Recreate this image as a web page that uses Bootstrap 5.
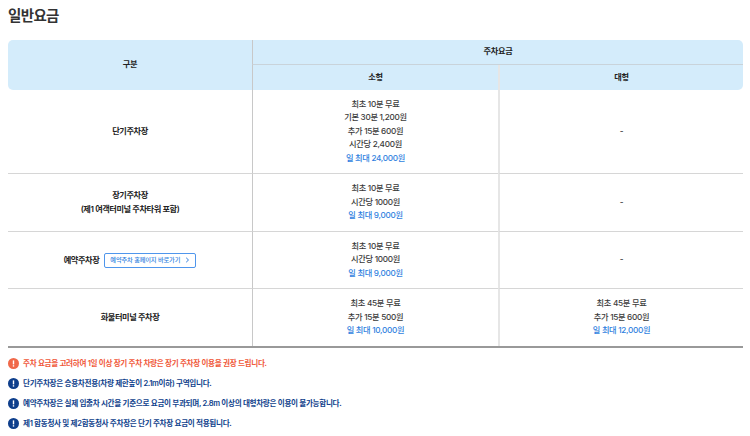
<!DOCTYPE html>
<html lang="ko">
<head>
<meta charset="utf-8">
<title>일반요금</title>
<link href="https://cdn.jsdelivr.net/npm/bootstrap@5.3.0/dist/css/bootstrap.min.css" rel="stylesheet">
<style>
html,body{height:100%;overflow:hidden}
body{font-family:Inter,"Noto Sans CJK KR","Noto Sans",sans-serif;background:#fff;color:#333;padding:0 7px 0 8px;font-size:8.2px}
.fee-title{font-size:14.5px;font-weight:600;line-height:22px;margin:5px 0 13px;color:#333;letter-spacing:-.65px}
.fee-table{table-layout:fixed;width:735px;margin:0;border-collapse:separate;border-spacing:0;border-bottom:2px solid #999}
.fee-table th,.fee-table td{padding:1px 0 0;text-align:center;vertical-align:middle;font-size:8.2px;line-height:13.6px;border:0;color:#3a3a3a;font-weight:500;letter-spacing:-.3px;box-shadow:none;background:transparent}
.fee-table thead th{background:#d4ecfb;font-weight:700;color:#222}
.fee-table .r1{height:24.5px;border-bottom:1px solid #c9d3da}
.fee-table .r2{height:25px}
.fee-table .sep{border-left:1px solid #c8c8c8}
.fee-table .sep2{border-left:2px solid #e6e6e6}
.fee-table .corner-l{border-radius:5px 0 0 5px}
.fee-table .corner-tr{border-top-right-radius:5px}
.fee-table .corner-br{border-bottom-right-radius:5px}
.fee-table tbody tr>*{border-bottom:1px solid #d6d6d6}
.fee-table tbody tr:last-child>*{border-bottom:0}
.fee-table tbody th{font-weight:600;color:#222;letter-spacing:-.42px}
.h-a{height:84px}.h-b{height:58px}.h-c{height:57px}.h-d{height:57px}
.max-fee{color:#2f7fe0}
.book-btn{display:inline-flex;align-items:center;gap:5px;height:15px;padding:0 5px;margin-left:5px;border:1px solid #4f96ec;border-radius:2px;color:#2f7fe0;font-size:6.2px;font-weight:500;letter-spacing:-.12px;text-decoration:none;vertical-align:middle;line-height:1}
.note-list{list-style:none;padding:0;margin:6px 0 0}
.note-item{display:flex;align-items:center;gap:4px;height:20px;font-size:7.6px;font-weight:600;color:#0f3f8c;letter-spacing:-.33px}
.note-item.warn{color:#f0583a}
.note-ico{width:11px;height:11px;flex:none}
</style>
</head>
<body>
<h2 class="fee-title">일반요금</h2>
<table class="table fee-table">
<colgroup><col style="width:244px"><col style="width:246px"><col style="width:245px"></colgroup>
<thead>
<tr><th rowspan="2" class="corner-l">구분</th><th colspan="2" class="r1 sep corner-tr">주차요금</th></tr>
<tr><th class="r2 sep">소형</th><th class="r2 sep2 corner-br">대형</th></tr>
</thead>
<tbody>
<tr class="h-a"><th>단기주차장</th><td class="sep">최초 10분 무료<br>기본 30분 1,200원<br>추가 15분 600원<br>시간당 2,400원<br><span class="max-fee">일 최대 24,000원</span></td><td class="sep2">-</td></tr>
<tr class="h-b"><th>장기주차장<br>(제1 여객터미널 주차타워 포함)</th><td class="sep">최초 10분 무료<br>시간당 1000원<br><span class="max-fee">일 최대 9,000원</span></td><td class="sep2">-</td></tr>
<tr class="h-c"><th>예약주차장<a href="#" class="book-btn">예약주차 홈페이지 바로가기 <svg width="5" height="6" viewBox="0 0 5 6"><path d="M1.2.8 3.5 3 1.2 5.2" fill="none" stroke="#2f7fe0" stroke-width="1"/></svg></a></th><td class="sep">최초 10분 무료<br>시간당 1000원<br><span class="max-fee">일 최대 9,000원</span></td><td class="sep2">-</td></tr>
<tr class="h-d"><th>화물터미널 주차장</th><td class="sep">최초 45분 무료<br>추가 15분 500원<br><span class="max-fee">일 최대 10,000원</span></td><td class="sep2">최초 45분 무료<br>추가 15분 600원<br><span class="max-fee">일 최대 12,000원</span></td></tr>
</tbody>
</table>
<ul class="note-list">
<li class="note-item warn"><svg class="note-ico" viewBox="0 0 11 11"><circle cx="5.5" cy="5.5" r="5.5" fill="#f0694a"/><rect x="4.8" y="2.4" width="1.4" height="4" fill="#fff"/><rect x="4.8" y="7.2" width="1.4" height="1.4" fill="#fff"/></svg>주차 요금을 고려하여 1일 이상 장기 주차 차량은 장기 주차장 이용을 권장 드립니다.</li>
<li class="note-item"><svg class="note-ico" viewBox="0 0 11 11"><circle cx="5.5" cy="5.5" r="5.5" fill="#0f3f8c"/><rect x="4.8" y="2.4" width="1.4" height="4" fill="#fff"/><rect x="4.8" y="7.2" width="1.4" height="1.4" fill="#fff"/></svg>단기주차장은 승용차전용(차량 제한높이 2.1m이하) 구역입니다.</li>
<li class="note-item"><svg class="note-ico" viewBox="0 0 11 11"><circle cx="5.5" cy="5.5" r="5.5" fill="#0f3f8c"/><rect x="4.8" y="2.4" width="1.4" height="4" fill="#fff"/><rect x="4.8" y="7.2" width="1.4" height="1.4" fill="#fff"/></svg>예약주차장은 실제 입출차 시간을 기준으로 요금이 부과되며, 2.8m 이상의 대형차량은 이용이 불가능합니다.</li>
<li class="note-item"><svg class="note-ico" viewBox="0 0 11 11"><circle cx="5.5" cy="5.5" r="5.5" fill="#0f3f8c"/><rect x="4.8" y="2.4" width="1.4" height="4" fill="#fff"/><rect x="4.8" y="7.2" width="1.4" height="1.4" fill="#fff"/></svg>제1 합동청사 및 제2합동청사 주차장은 단기 주차장 요금이 적용됩니다.</li>
</ul>
<script src="https://cdn.jsdelivr.net/npm/bootstrap@5.3.0/dist/js/bootstrap.bundle.min.js"></script>
</body>
</html>
